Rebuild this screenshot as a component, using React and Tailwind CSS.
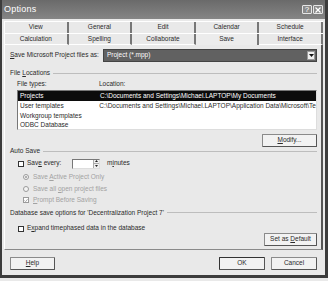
import React from 'react'

const tabsTop = ['View', 'General', 'Edit', 'Calendar', 'Schedule']
const tabsBottom = ['Calculation', 'Spelling', 'Collaborate', 'Save', 'Interface']

function Check({ checked, disabled }) {
  return (
    <span className={`inline-flex items-center justify-center w-[6px] h-[6px] border ${disabled ? 'border-[#9a9a9a]' : 'border-[#333]'} bg-white shrink-0`}>
      {checked && (
        <svg width="5" height="5" viewBox="0 0 5 5">
          <path d="M0.5 2.5 L2 4 L4.5 0.8" fill="none" stroke={disabled ? '#9a9a9a' : '#222'} strokeWidth="1" />
        </svg>
      )}
    </span>
  )
}

function Radio({ on }) {
  return (
    <span className="inline-flex items-center justify-center w-[6px] h-[6px] rounded-full border border-[#9a9a9a] bg-[#f4f4f4] shrink-0">
      {on && <span className="w-[2px] h-[2px] rounded-full bg-[#9a9a9a]" />}
    </span>
  )
}

function Btn({ children, className }) {
  return (
    <div className={`flex items-center justify-center h-[13px] bg-[#f2f2f2] border border-[#8a8a8a] border-b-[#555] border-r-[#555] rounded-[1px] text-[#2a2a2a] ${className}`}>
      <span className="whitespace-nowrap">{children}</span>
    </div>
  )
}

function GroupLabel({ children }) {
  return (
    <div className="flex items-center gap-[3px] text-[#2a2a2a]">
      <span className="whitespace-nowrap">{children}</span>
      <span className="flex-1 h-0 border-t border-[#bdbdbd]" />
    </div>
  )
}

export default function App() {
  return (
    <div
      className="w-[328px] h-[281px] overflow-hidden bg-[#e9e9e9] text-[6.5px] leading-none text-[#2a2a2a]"
      style={{ fontFamily: '"Liberation Sans", Arial, sans-serif' }}
    >
      <div className="flex flex-col h-[278px] border-l-2 border-r-[3px] border-b-[3px] border-[#3c3c3c]">
        {/* title bar */}
        <div className="flex items-center h-[19px] bg-gradient-to-b from-[#6a6a6a] to-[#858585] pl-[2px] pr-[2px] shrink-0">
          <span className="text-white text-[9px] tracking-[0.2px]">Options</span>
          <div className="ml-auto flex gap-[1px]">
            <div className="w-[10px] h-[9px] border border-[#e6e6e6] rounded-[1px] bg-[#8a8a8a] text-white text-[8px] flex items-center justify-center">?</div>
            <div className="w-[10px] h-[9px] border border-[#e6e6e6] rounded-[1px] bg-[#8a8a8a] flex items-center justify-center">
              <svg width="6" height="6" viewBox="0 0 6 6"><path d="M0.5 0.5 L5.5 5.5 M5.5 0.5 L0.5 5.5" stroke="#fff" strokeWidth="1.2" /></svg>
            </div>
          </div>
        </div>

        {/* tabs */}
        <div className="mt-[2px] px-[2px] shrink-0">
          <div className="flex h-[12px] border-t border-l border-[#fff]">
            {tabsTop.map((t) => (
              <div key={t} className="flex-1 flex items-center justify-center border-r-2 border-[#777]">{t}</div>
            ))}
          </div>
          <div className="flex h-[12px] border-t border-l border-[#fff]">
            {tabsBottom.map((t) => (
              <div key={t} className={`flex-1 flex items-center justify-center border-r-2 border-[#777] ${t === 'Save' ? 'bg-[#ececec]' : 'border-b border-b-[#fff]'}`}>{t}</div>
            ))}
          </div>
        </div>

        {/* panel */}
        <div className="mx-[2px] h-[205px] shrink-0 border-l border-[#fff] border-r-2 border-r-[#555] border-b border-b-[#8a8a8a] pl-[5px] pr-[4px] pt-[4px]">
          <div className="flex items-center h-[13px]">
            <span className="w-[93px] whitespace-nowrap"><span className="underline">S</span>ave Microsoft Project files as:</span>
            <div className="flex-1 h-[13px] bg-[#616161] border border-[#444] flex items-center pl-[3px] text-white">
              Project (*.mpp)
              <div className="ml-auto mr-[1px] w-[8px] h-[9px] bg-[#efefef] border border-[#999] flex items-center justify-center">
                <svg width="5" height="3" viewBox="0 0 5 3"><path d="M0 0 H5 L2.5 3 Z" fill="#111" /></svg>
              </div>
            </div>
          </div>

          <div className="mt-[8px]"><GroupLabel>File <span className="underline">L</span>ocations</GroupLabel></div>
          <div className="flex mt-[4px] pl-[7px]">
            <span className="w-[82px]">File types:</span>
            <span>Location:</span>
          </div>
          <div className="ml-[7px] mt-[3px] h-[40px] bg-white border border-[#777] border-r-[#ddd] border-b-[#ddd] overflow-hidden whitespace-nowrap">
            <div className="flex h-[10px] items-center bg-[#0c0c0c] text-white">
              <span className="w-[82px] pl-[2px]">Projects</span>
              <span>C:\Documents and Settings\Michael.LAPTOP\My Documents</span>
            </div>
            <div className="flex h-[10px] items-center">
              <span className="w-[82px] pl-[2px]">User templates</span>
              <span>C:\Documents and Settings\Michael.LAPTOP\Application Data\Microsoft\Te</span>
            </div>
            <div className="flex h-[10px] items-center">
              <span className="w-[82px] pl-[2px]">Workgroup templates</span>
            </div>
            <div className="flex h-[8px] items-center">
              <span className="w-[82px] pl-[2px]">ODBC Database</span>
            </div>
          </div>
          <div className="flex justify-end mt-[4px]">
            <Btn className="w-[55px]"><span className="underline">M</span>odify...</Btn>
          </div>

          <div className="mt-[1px]"><GroupLabel>Auto Save</GroupLabel></div>
          <div className="flex items-center mt-[4px] pl-[8px] h-[10px]">
            <Check />
            <span className="ml-[3px] w-[45px] whitespace-nowrap">Sav<span className="underline">e</span> every:</span>
            <div className="flex w-[28px] h-[10px] bg-white border border-[#777] border-r-[#ddd] border-b-[#ddd]">
              <div className="ml-auto w-[6px] flex flex-col bg-[#efefef] border-l border-[#aaa]">
                <div className="flex-1 flex items-center justify-center border-b border-[#aaa]"><svg width="3" height="2" viewBox="0 0 3 2"><path d="M0 2 L1.5 0 L3 2Z" fill="#222" /></svg></div>
                <div className="flex-1 flex items-center justify-center"><svg width="3" height="2" viewBox="0 0 3 2"><path d="M0 0 L1.5 2 L3 0Z" fill="#222" /></svg></div>
              </div>
            </div>
            <span className="ml-[7px]">m<span className="underline">i</span>nutes</span>
          </div>
          <div className="flex items-center mt-[4px] pl-[13px] h-[9px] text-[#a2a2a2]">
            <Radio on />
            <span className="ml-[4px] whitespace-nowrap">Save <span className="underline">A</span>ctive Project Only</span>
          </div>
          <div className="flex items-center mt-[3px] pl-[13px] h-[9px] text-[#a2a2a2]">
            <Radio />
            <span className="ml-[4px] whitespace-nowrap">Save all <span className="underline">o</span>pen project files</span>
          </div>
          <div className="flex items-center mt-[2px] pl-[13px] h-[9px] text-[#a2a2a2]">
            <Check checked disabled />
            <span className="ml-[4px] whitespace-nowrap"><span className="underline">P</span>rompt Before Saving</span>
          </div>

          <div className="mt-[5px]"><GroupLabel>Database save options for 'Decentralization Project 7'</GroupLabel></div>
          <div className="flex items-center mt-[8px] pl-[8px] h-[9px]">
            <Check />
            <span className="ml-[3px] whitespace-nowrap">E<span className="underline">x</span>pand timephased data in the database</span>
          </div>
          <div className="flex justify-end">
            <Btn className="w-[53px]">Set as <span className="underline">D</span>efault</Btn>
          </div>
        </div>

        {/* bottom buttons */}
        <div className="flex items-center mt-[7px] pl-[8px] pr-[8px] shrink-0">
          <Btn className="w-[45px]"><span className="underline">H</span>elp</Btn>
          <Btn className="w-[46px] ml-auto border-[#333] border-b-[#222] border-r-[#222]">OK</Btn>
          <Btn className="w-[46px] ml-[6px]">Cancel</Btn>
        </div>
      </div>
    </div>
  )
}
